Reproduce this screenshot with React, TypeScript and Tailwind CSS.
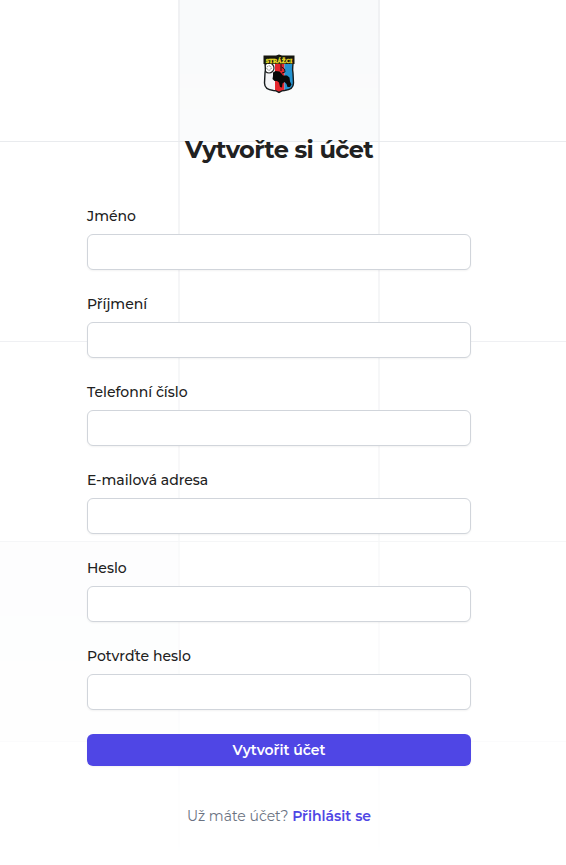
import React from "react";

const fields = [
  { id: "first-name", label: "Jméno", type: "text", autoComplete: "given-name" },
  { id: "last-name", label: "Příjmení", type: "text", autoComplete: "family-name" },
  { id: "phone", label: "Telefonní číslo", type: "tel", autoComplete: "tel" },
  { id: "email", label: "E-mailová adresa", type: "email", autoComplete: "email" },
  { id: "password", label: "Heslo", type: "password", autoComplete: "new-password" },
  { id: "password-confirm", label: "Potvrďte heslo", type: "password", autoComplete: "new-password" },
];

function GridBackground() {
  return (
    <svg
      aria-hidden="true"
      className="absolute inset-0 -z-10 h-full w-full [mask-image:linear-gradient(to_bottom,white,transparent)]"
    >
      <svg x="50%" y="0" className="overflow-visible">
        <g transform="translate(-4 -59)">
          <path d="M-100 0h200v200h-200z M-300 600h200v200h-200z" fill="#f9fafb" />
          {[-900, -700, -500, -300, -100, 100, 300, 500, 700, 900].map((x) => (
            <path key={x} d={`M${x} 0V1200`} stroke="#f0f1f3" strokeWidth="2" />
          ))}
          {[200, 400, 600, 800, 1000].map((y) => (
            <path key={y} d={`M-1000 ${y + 0.5}H1000`} stroke="#e5e7eb" />
          ))}
        </g>
      </svg>
    </svg>
  );
}

function Logo() {
  return (
    <svg viewBox="0 0 32 40" role="img" aria-label="Strážci" className="mx-auto h-10 w-8">
      <defs>
        <clipPath id="shield">
          <path d="M2 9h28c0 4-1 6 0 10l.5 10c0 5-4 7-9 7.500-3 0-4 1-5.500 2-1.500-1-2.500-2-5.500-2-5-.5-9-2.500-9-7.500L2 19c1-4 0-6 0-10z" />
        </clipPath>
      </defs>
      <g clipPath="url(#shield)">
        <path d="M0 5h12v35H0z" fill="#f4f4f6" />
        <path d="M12 5h9.500v35H12z" fill="#e3262d" />
        <path d="M21.500 5H32v35H21.500z" fill="#2493d1" />
        <circle cx="6" cy="14" r="5" fill="#fff" stroke="#222" strokeWidth="1.2" />
        <circle cx="6" cy="14" r="2.200" fill="none" stroke="#666" strokeWidth="1" strokeDasharray="1 .8" />
      </g>
      <path
        d="M2 9c0 4 1 6 0 10l-.5 10c0 5 4 7 9 7.500 3 0 4 1 5.500 2 1.500-1 2.500-2 5.500-2 5-.5 9-2.500 9-7.500L30 19c-1-4 0-6 0-10"
        fill="none"
        stroke="#161b1d"
        strokeWidth="1.400"
      />
      <path d="M18 9v8M18.500 13l3 2 .5 3-3 1" fill="none" stroke="#171012" strokeWidth="1" />
      <path
        d="M10 18.500l2.500-1.500 4 .5 2 2 1.500 2 4 0 2.500 2 .5 4 1.500 3-1.500 2.500-2.500 0-1-3-2-2-2 1.500-.5 4-2-.5-1-4.500-2-1.500-2.500 0-2-2 .5-3z"
        fill="#090909"
      />
      <path d="M.5 1.500H13l3-1 3 1h12.500v8.500H.5z" fill="#16160f" />
      <text
        x="16"
        y="8.500"
        textAnchor="middle"
        fill="#f5e32a"
        stroke="#f5e32a"
        strokeWidth=".3"
        className="font-['Liberation_Serif',serif] text-[6px] font-bold"
      >
        STRÁŽCI
      </text>
    </svg>
  );
}

export default function App() {
  return (
    <main className="relative isolate min-h-screen overflow-hidden bg-white py-[54px] pr-2 font-[Montserrat,Inter,sans-serif] text-[#212121]">
      <GridBackground />
      <div className="mx-auto w-full max-w-sm">
        <Logo />
        <h1 className="mt-10 text-center text-2xl leading-8 font-bold tracking-tight">Vytvořte si účet</h1>
        <form className="mt-10 flex flex-col gap-6" onSubmit={(e) => e.preventDefault()}>
          {fields.map((f) => (
            <div key={f.id} className="flex flex-col gap-2">
              <label htmlFor={f.id} className="text-sm leading-5 font-medium">
                {f.label}
              </label>
              <input
                id={f.id}
                name={f.id}
                type={f.type}
                autoComplete={f.autoComplete}
                className="h-9 w-full rounded-md border border-[#d1d5db] bg-white px-3 text-sm shadow-xs outline-none focus:border-indigo-600"
              />
            </div>
          ))}
          <button
            type="submit"
            className="h-8 w-full rounded-md bg-[#4f46e5] text-sm leading-6 font-semibold text-white shadow-xs hover:bg-indigo-500"
          >
            Vytvořit účet
          </button>
        </form>
        <p className="mt-10 text-center text-sm leading-5 text-gray-500">
          Už máte účet?{" "}
          <a href="#prihlasit" className="font-semibold text-[#4f46e5] hover:text-indigo-500">
            Přihlásit se
          </a>
        </p>
      </div>
    </main>
  );
}
